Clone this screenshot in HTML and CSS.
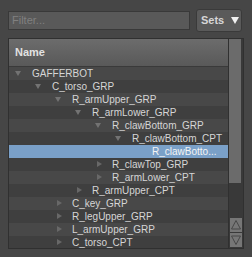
FILE: index.html
```html
<!DOCTYPE html>
<html>
<head>
<meta charset="utf-8">
<link rel="stylesheet" href="styles.css">
</head>
<body>
<div class="toolbar">
  <div class="filter">Filter...</div>
  <div class="sets">Sets <span class="caret"></span></div>
</div>
<div class="panel">
  <div class="tree">
    <div class="header">Name</div>
    <div class="row d0"><span class="tog open"></span><span class="label">GAFFERBOT</span></div>
    <div class="row d1"><span class="tog open"></span><span class="label">C_torso_GRP</span></div>
    <div class="row d2"><span class="tog open"></span><span class="label">R_armUpper_GRP</span></div>
    <div class="row d3"><span class="tog open"></span><span class="label">R_armLower_GRP</span></div>
    <div class="row d4"><span class="tog open"></span><span class="label">R_clawBottom_GRP</span></div>
    <div class="row d5"><span class="tog open"></span><span class="label">R_clawBottom_CPT</span></div>
    <div class="row d6 selected"><span class="tog"></span><span class="label">R_clawBotto...</span></div>
    <div class="row d4"><span class="tog closed"></span><span class="label">R_clawTop_GRP</span></div>
    <div class="row d4"><span class="tog closed"></span><span class="label">R_armLower_CPT</span></div>
    <div class="row d3"><span class="tog closed"></span><span class="label">R_armUpper_CPT</span></div>
    <div class="row d2"><span class="tog closed"></span><span class="label">C_key_GRP</span></div>
    <div class="row d2"><span class="tog closed"></span><span class="label">R_legUpper_GRP</span></div>
    <div class="row d2"><span class="tog closed"></span><span class="label">L_armUpper_GRP</span></div>
    <div class="row d2"><span class="tog closed"></span><span class="label">C_torso_CPT</span></div>
  </div>
  <div class="scrollbar">
    <div class="thumb"></div>
    <div class="track"></div>
    <div class="btn up"><svg width="12" height="12" viewBox="0 0 12 12"><path d="M6 1.5 L10.5 10 L1.5 10 Z" fill="none" stroke="#474747" stroke-width="1"/></svg></div>
    <div class="btn down"><svg width="12" height="12" viewBox="0 0 12 12"><path d="M1.5 2 L10.5 2 L6 10.5 Z" fill="none" stroke="#474747" stroke-width="1"/></svg></div>
  </div>
</div>
</body>
</html>
```
FILE: styles.css
```css
html, body {
  margin: 0;
  padding: 0;
  background: #464646;
  font-family: "Liberation Sans", Arial, sans-serif;
  font-size: 10px;
  color: #d6d6d6;
}
.toolbar {
  display: flex;
  align-items: flex-start;
  padding: 9px 0 0 8px;
  height: 29px;
  box-sizing: border-box;
}
.filter {
  margin-top: 2px;
  width: 182px;
  height: 19px;
  box-sizing: border-box;
  border: 1px solid #393939;
  background: #595959;
  color: #808080;
  font-size: 11px;
  line-height: 17px;
  padding-left: 3px;
}
.sets {
  margin-left: 6px;
  width: 46px;
  height: 23px;
  box-sizing: border-box;
  border: 1px solid #3a3a3a;
  border-radius: 3px;
  background: #5a5a5a;
  color: #d6d6d6;
  font-weight: bold;
  font-size: 11px;
  line-height: 21px;
  padding-left: 4px;
  display: flex;
  align-items: center;
  gap: 7px;
}
.caret {
  width: 0;
  height: 0;
  border-left: 4px solid transparent;
  border-right: 4px solid transparent;
  border-top: 7px solid #f2f2f2;
}
.panel {
  margin: 9px 0 0 8px;
  width: 236px;
  height: 211px;
  box-sizing: border-box;
  border: 1px solid #303030;
  display: flex;
  overflow: hidden;
}
.tree {
  width: 219px;
  border-right: 1px solid #303030;
  overflow: hidden;
}
.header {
  height: 28px;
  box-sizing: border-box;
  background: linear-gradient(#6c6c6c, #595959);
  border-bottom: 1px solid #3a3a3a;
  font-weight: bold;
  font-size: 11px;
  color: #e2e2e2;
  line-height: 27px;
  padding-left: 6px;
}
.row {
  height: 13px;
  display: flex;
  align-items: center;
  white-space: nowrap;
  background: #484848;
  font-size: 10px;
  line-height: 13px;
}
.row:nth-child(odd) {
  background: #3f3f3f;
}
.row.selected {
  background: #7aa0c8;
  color: #f4f4f4;
}
.d0 { padding-left: 6px; }
.d1 { padding-left: 26px; }
.d2 { padding-left: 46px; }
.d3 { padding-left: 66px; }
.d4 { padding-left: 86px; }
.d5 { padding-left: 106px; }
.d6 { padding-left: 126px; }
.tog {
  width: 17px;
  flex: none;
  height: 13px;
  position: relative;
}
.tog.open::before {
  content: "";
  position: absolute;
  left: 0;
  top: 4px;
  border-left: 3px solid transparent;
  border-right: 3px solid transparent;
  border-top: 5px solid #737373;
}
.tog.closed::before {
  content: "";
  position: absolute;
  left: 2px;
  top: 3px;
  border-top: 3px solid transparent;
  border-bottom: 3px solid transparent;
  border-left: 5px solid #686868;
}
.scrollbar {
  width: 14px;
  display: flex;
  flex-direction: column;
  background: #393939;
}
.thumb {
  height: 144px;
  margin-right: 2px;
  background: #6b6b6b;
}
.track {
  flex: 1;
}
.btn {
  height: 14px;
  margin: 0 1px 1px 1px;
  background: #767676;
  display: flex;
  align-items: center;
  justify-content: center;
}
```
